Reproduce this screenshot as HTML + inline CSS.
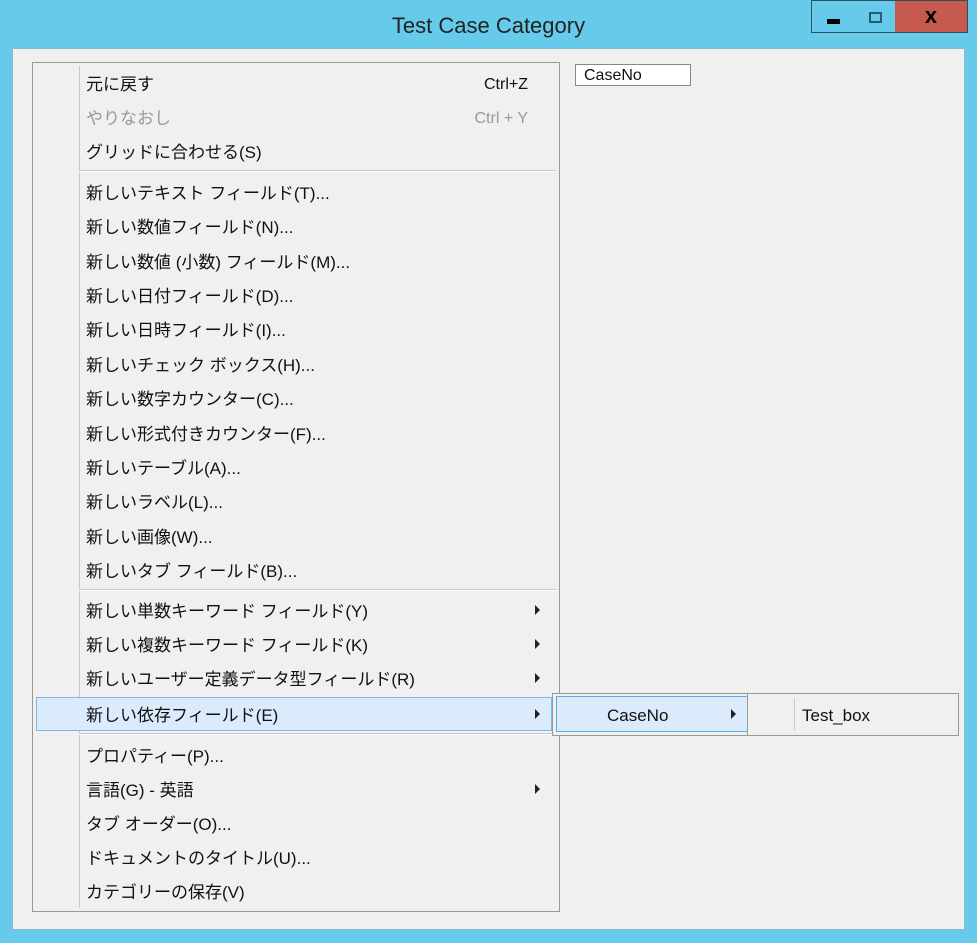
<!DOCTYPE html>
<html><head><meta charset="utf-8"><style>
body{margin:0;width:977px;height:943px;background:#66cbea;position:relative;overflow:hidden;font-family:"Liberation Sans","Noto Sans CJK JP",sans-serif;}
.a{position:absolute}
.title{left:0;top:13px;width:977px;text-align:center;font-size:22px;color:#222}
.btn{top:0;height:33px;border:1px solid #2f4f5f;box-sizing:border-box}
.client{left:12px;top:48px;width:953px;height:882px;background:#f0f0f0;border:1px solid #8fb8c8;box-sizing:border-box}
.menu{left:32px;top:62px;width:528px;height:850px;border:1px solid #999;box-sizing:border-box;background:#f0f0f0}
.it{position:absolute;left:86px;font-size:17px;letter-spacing:0;color:#111;white-space:nowrap;line-height:20px;margin-top:2px}
.sc{position:absolute;left:456px;width:72px;text-align:right;font-size:16px;color:#111;margin-top:3px}
.sep{position:absolute;left:79px;width:477px;height:1px;background:#c8c8c8;border-bottom:1px solid #fff}
.arr{position:absolute;left:535px;width:0;height:0;border-top:5px solid transparent;border-bottom:5px solid transparent;border-left:5px solid #222}
</style></head><body>
<div class="a title">Test Case Category</div>
<div class="a btn" style="left:811px;width:45px;background:#66cbea"><div class="a" style="left:15px;top:18px;width:13px;height:5px;background:#000"></div></div>
<div class="a btn" style="left:855px;width:41px;background:#66cbea;border-left:none"><div class="a" style="left:14px;top:11px;width:9px;height:7px;border:2px solid #2a5a70"></div></div>
<div class="a btn" style="left:895px;width:73px;background:#c75a4f;border-left:none;color:#000;font-weight:bold;font-size:22px;text-align:center;line-height:30px">x</div>
<div class="a client"></div>
<div class="a" style="left:575px;top:64px;width:116px;height:22px;background:#fff;border:1px solid #888;box-sizing:border-box;font-size:16px;line-height:22px;padding-left:8px;color:#111">CaseNo</div>
<div class="a menu"></div>
<div class="a" style="left:79px;top:66px;width:1px;height:842px;background:#c8c8c8"></div>
<div class="a" style="left:36px;top:697px;width:516px;height:34px;background:#dcebfc;border:1px solid #7ab8e8;box-sizing:border-box"></div>
<div class="sep" style="top:170px"></div>
<div class="sep" style="top:589px"></div>
<div class="sep" style="top:733px"></div>
<div class="it" style="top:73px">元に戻す</div><div class="sc" style="top:73px">Ctrl+Z</div>
<div class="it" style="top:107px;color:#999">やりなおし</div><div class="sc" style="top:107px;color:#999">Ctrl + Y</div>
<div class="it" style="top:141px">グリッドに合わせる(S)</div>
<div class="it" style="top:182px">新しいテキスト フィールド(T)...</div>
<div class="it" style="top:216px">新しい数値フィールド(N)...</div>
<div class="it" style="top:251px">新しい数値 (小数) フィールド(M)...</div>
<div class="it" style="top:285px">新しい日付フィールド(D)...</div>
<div class="it" style="top:319px">新しい日時フィールド(I)...</div>
<div class="it" style="top:354px">新しいチェック ボックス(H)...</div>
<div class="it" style="top:388px">新しい数字カウンター(C)...</div>
<div class="it" style="top:423px">新しい形式付きカウンター(F)...</div>
<div class="it" style="top:457px">新しいテーブル(A)...</div>
<div class="it" style="top:491px">新しいラベル(L)...</div>
<div class="it" style="top:526px">新しい画像(W)...</div>
<div class="it" style="top:560px">新しいタブ フィールド(B)...</div>
<div class="it" style="top:600px">新しい単数キーワード フィールド(Y)</div><div class="arr" style="top:605px"></div>
<div class="it" style="top:634px">新しい複数キーワード フィールド(K)</div><div class="arr" style="top:639px"></div>
<div class="it" style="top:668px">新しいユーザー定義データ型フィールド(R)</div><div class="arr" style="top:673px"></div>
<div class="it" style="top:704px">新しい依存フィールド(E)</div><div class="arr" style="top:709px"></div>
<div class="it" style="top:745px">プロパティー(P)...</div>
<div class="it" style="top:779px">言語(G) - 英語</div><div class="arr" style="top:784px"></div>
<div class="it" style="top:813px">タブ オーダー(O)...</div>
<div class="it" style="top:847px">ドキュメントのタイトル(U)...</div>
<div class="it" style="top:881px">カテゴリーの保存(V)</div>
<div class="a" style="left:552px;top:693px;width:407px;height:43px;background:#f0f0f0;border:1px solid #999;box-sizing:border-box"></div>
<div class="a" style="left:556px;top:696px;width:192px;height:36px;background:#dcebfc;border:1px solid #5aaee8;box-sizing:border-box"></div>
<div class="a" style="left:747px;top:694px;width:1px;height:41px;background:#999"></div>
<div class="a" style="left:794px;top:698px;width:1px;height:32px;background:#c8c8c8"></div>
<div class="it" style="left:607px;top:704px">CaseNo</div>
<div class="arr" style="left:731px;top:709px"></div>
<div class="it" style="left:802px;top:704px">Test_box</div>
</body></html>
